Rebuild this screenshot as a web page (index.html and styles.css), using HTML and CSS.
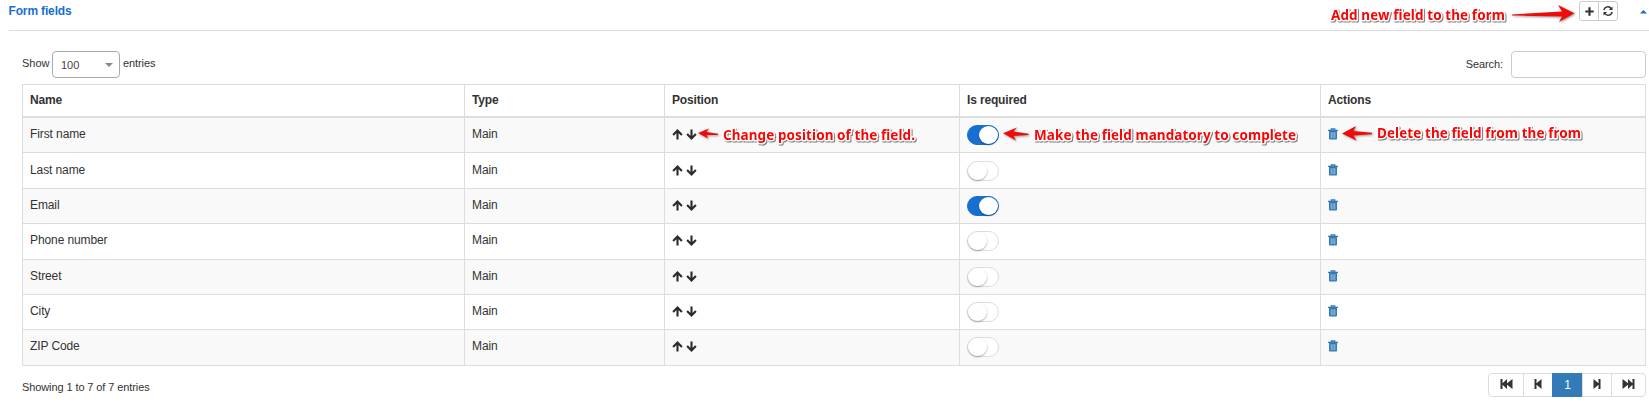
FILE: index.html
```html
<!DOCTYPE html>
<html lang="en">
<head>
<meta charset="utf-8">
<title>Form fields</title>
<link rel="stylesheet" href="styles.css">
</head>
<body>
<svg width="0" height="0" class="defs" aria-hidden="true">
  <symbol id="up" viewBox="0 0 11 11"><path d="M5.5 10.4V2M1.1 6L5.5 1.5L9.9 6" fill="none" stroke="#2b2b2b" stroke-width="2.1"/></symbol>
  <symbol id="down" viewBox="0 0 11 11"><path d="M5.5 .6V9M1.1 5L5.5 9.5L9.9 5" fill="none" stroke="#2b2b2b" stroke-width="2.1"/></symbol>
  <symbol id="trash" viewBox="0 0 10 12"><path d="M3.2 2V.8H6.8V2M0 2.4H10" fill="none" stroke="#337ab7" stroke-width="1.2"/><path d="M1 3H9V10.5Q9 11.5 8 11.5H2Q1 11.5 1 10.5Z" fill="#337ab7"/><path d="M3.2 4.2V10.2M5 4.2V10.2M6.8 4.2V10.2" stroke="#b9d2e8" stroke-width=".8"/></symbol>
</svg>
<header class="panel-head">
  <h2 class="title">Form fields</h2>
  <div class="tools">
    <button class="tool"><svg width="9" height="9" viewBox="0 0 9 9"><path d="M4.5 .3V8.7M.3 4.5H8.7" stroke="#333" stroke-width="2.2"/></svg></button>
    <button class="tool"><svg width="10" height="10" viewBox="0 0 10 10"><path d="M.9 4.2A4 4 0 0 1 8.2 2.6M9.1 5.8A4 4 0 0 1 1.8 7.4" fill="none" stroke="#333" stroke-width="1.4"/><path d="M9.5 .4V4H5.9ZM.5 9.6V6H4.1Z" fill="#333"/></svg></button>
  </div>
  <svg class="caret" width="7" height="4" viewBox="0 0 7 4"><path d="M0 3.5L3.5 0L7 3.5Z" fill="#1670cf"/></svg>
</header>
<main class="panel">
  <div class="controls">
    <span class="show">Show</span>
    <div class="select"><span>100</span><svg width="8" height="4" viewBox="0 0 8 4"><path d="M0 0H8L4 4Z" fill="#888"/></svg></div>
    <span class="entries">entries</span>
    <label class="search" for="q">Search:</label>
    <input class="query" id="q" type="text">
  </div>
  <table class="grid">
    <colgroup><col class="c1"><col class="c2"><col class="c3"><col class="c4"><col class="c5"></colgroup>
    <thead><tr><th>Name</th><th>Type</th><th>Position</th><th>Is required</th><th>Actions</th></tr></thead>
    <tbody>
      <tr class="odd"><td>First name</td><td>Main</td><td><div class="moves"><svg><use href="#up"/></svg><svg><use href="#down"/></svg></div></td><td><div class="switch on"></div></td><td><svg class="trash"><use href="#trash"/></svg></td></tr>
      <tr class="tall low"><td>Last name</td><td>Main</td><td><div class="moves"><svg><use href="#up"/></svg><svg><use href="#down"/></svg></div></td><td><div class="switch"></div></td><td><svg class="trash"><use href="#trash"/></svg></td></tr>
      <tr class="odd"><td>Email</td><td>Main</td><td><div class="moves"><svg><use href="#up"/></svg><svg><use href="#down"/></svg></div></td><td><div class="switch on"></div></td><td><svg class="trash"><use href="#trash"/></svg></td></tr>
      <tr class="tall"><td>Phone number</td><td>Main</td><td><div class="moves"><svg><use href="#up"/></svg><svg><use href="#down"/></svg></div></td><td><div class="switch"></div></td><td><svg class="trash"><use href="#trash"/></svg></td></tr>
      <tr class="odd"><td>Street</td><td>Main</td><td><div class="moves"><svg><use href="#up"/></svg><svg><use href="#down"/></svg></div></td><td><div class="switch"></div></td><td><svg class="trash"><use href="#trash"/></svg></td></tr>
      <tr><td>City</td><td>Main</td><td><div class="moves"><svg><use href="#up"/></svg><svg><use href="#down"/></svg></div></td><td><div class="switch"></div></td><td><svg class="trash"><use href="#trash"/></svg></td></tr>
      <tr class="odd tall"><td>ZIP Code</td><td>Main</td><td><div class="moves"><svg><use href="#up"/></svg><svg><use href="#down"/></svg></div></td><td><div class="switch"></div></td><td><svg class="trash"><use href="#trash"/></svg></td></tr>
    </tbody>
  </table>
  <footer class="foot">
    <span class="info">Showing 1 to 7 of 7 entries</span>
    <div class="pages">
      <a class="page wide"><svg width="13" height="10" viewBox="0 0 13 10"><path d="M.5 0H2.5V4.3L7 0V4.3L12.5 0V10L7 5.7V10L2.5 5.7V10H.5Z" fill="#333"/></svg></a>
      <a class="page"><svg width="8" height="10" viewBox="0 0 8 10"><path d="M.5 0H2.5V4.3L7.5 0V10L2.5 5.7V10H.5Z" fill="#333"/></svg></a>
      <a class="page active">1</a>
      <a class="page"><svg width="8" height="10" viewBox="0 0 8 10"><path d="M7.5 0H5.5V4.3L.5 0V10L5.5 5.7V10H7.5Z" fill="#333"/></svg></a>
      <a class="page wide"><svg width="13" height="10" viewBox="0 0 13 10"><path d="M12.5 0H10.5V4.3L6 0V4.3L.5 0V10L6 5.7V10L10.5 5.7V10H12.5Z" fill="#333"/></svg></a>
    </div>
  </footer>
</main>
<svg class="notes" width="1649" height="404" viewBox="0 0 1649 404">
  <g class="arrow">
    <path d="M1512 14.4L1562 11.6L1558 5L1574.5 13.3L1559 22L1562 16.4L1512 15.6Z"/>
    <path d="M698 133L709 128.5L706.5 132L718 133.8V135L706.5 135L708 138.5Z"/>
    <path d="M1003 133.3L1017 127.5L1013.5 131.5L1028.5 133.8V135L1013.5 136L1016 140.5Z"/>
    <path d="M1342 133.5L1356 126L1353.5 131L1372 132.7V134.2L1353.5 135.6L1356.5 140.5Z"/>
  </g>
  <g class="note">
    <text x="1331" y="20" textLength="174">Add new field to the form</text>
    <text x="723" y="140" textLength="192">Change position of the field.</text>
    <text x="1034" y="140" textLength="262">Make the field mandatory to complete</text>
    <text x="1377" y="138" textLength="204">Delete the field from the from</text>
  </g>
</svg>
</body>
</html>
```
FILE: styles.css
```css
* { box-sizing: border-box; }
body {
  margin: 0;
  width: 1649px;
  height: 404px;
  overflow: hidden;
  position: relative;
  background: #fff;
  color: #333;
  font: 11px/16px "Liberation Sans", Arial, sans-serif;
}
svg { display: block; }
.defs { position: absolute; }
.panel-head {
  display: flex;
  height: 31px;
  margin-left: 9px;
  border-bottom: 1px solid #ddd;
}
.title {
  margin: 3px 0 0 -.5px;
  font-size: 12px;
  line-height: 16px;
  letter-spacing: -.15px;
  color: #1670cf;
}
.tools { display: flex; height: 20px; margin: 1px 22px 0 auto; }
.tool {
  display: flex;
  align-items: center;
  justify-content: center;
  width: 20px;
  padding: 0;
  border: 1px solid #ccc;
  border-radius: 3px 0 0 3px;
  background: #fff;
}
.tool + .tool { margin-left: -1px; border-radius: 0 3px 3px 0; }
.caret { margin: 10px 2px 0 0; }
.panel { padding: 20px 3px 0 22px; }
.controls { display: flex; height: 33px; }
.show { width: 30px; padding-top: 4px; }
.entries { margin-left: 3px; padding-top: 4px; letter-spacing: -.1px; }
.select {
  display: flex;
  align-items: center;
  justify-content: space-between;
  width: 68px;
  height: 27px;
  padding: 1px 6px 0 8px;
  border: 1px solid #aaa;
  border-radius: 4px;
  font-size: 11px;
  color: #444;
}
.search { margin-left: auto; padding-top: 5px; letter-spacing: -.1px; }
.query {
  width: 135px;
  height: 27px;
  margin-left: 8px;
  border: 1px solid #ccc;
  border-radius: 4px;
  background: #fff;
}
.grid {
  width: 1624px;
  table-layout: fixed;
  border-collapse: separate;
  border-spacing: 0;
  border-top: 1px solid #ddd;
  border-left: 1px solid #ddd;
  font-size: 12px;
}
.c1 { width: 442px; }
.c2 { width: 200px; }
.c3 { width: 295px; }
.c4 { width: 361px; }
.c5 { width: 325px; }
.grid th {
  height: 33px;
  padding: 7px 7px 0;
  text-align: left;
  vertical-align: top;
  border-right: 1px solid #ddd;
  border-bottom: 2px solid #ddd;
  letter-spacing: -.15px;
}
.grid td {
  height: 35px;
  padding: 8px 7px 0;
  vertical-align: top;
  border-right: 1px solid #ddd;
  border-bottom: 1px solid #ddd;
  letter-spacing: -.1px;
}
.tall td { height: 36px; }
.low td { padding-top: 9px; }
.odd td { background: #f9f9f9; }
.moves { display: flex; gap: 3px; padding-top: 3px; }
.moves svg { width: 11px; height: 11px; }
.trash { width: 10px; height: 12px; margin-top: 2px; }
.switch {
  width: 32px;
  height: 20px;
  margin: -1px 0 0;
  border: 1px solid #ddd;
  border-radius: 10px;
  background: #fff;
}
.switch::before {
  content: "";
  display: block;
  width: 19px;
  height: 18px;
  border-radius: 50%;
  background: #fff;
  box-shadow: 0 1px 2px rgba(0, 0, 0, .32);
}
.switch.on { border-color: #1670cf; background: #1670cf; }
.switch.on::before { margin-left: 11px; }
.foot { display: flex; justify-content: space-between; padding-top: 7px; }
.info { padding-top: 6px; letter-spacing: -.1px; }
.pages { display: flex; height: 24px; }
.page {
  display: flex;
  align-items: center;
  justify-content: center;
  width: 30px;
  margin-left: -1px;
  padding-bottom: 2px;
  border: 1px solid #ddd;
  font-size: 12px;
}
.page.wide { width: 36px; }
.page:first-child { border-radius: 4px 0 0 4px; }
.page:last-child { border-radius: 0 4px 4px 0; width: 35px; }
.page.active { width: 31px; padding: 0; background: #337ab7; border-color: #337ab7; color: #fff; }
.notes { position: absolute; left: 0; top: 0; pointer-events: none; }
.arrow {
  fill: #f00a0a;
  filter: drop-shadow(1px 1px 1px rgba(0, 0, 0, .4));
}
.note {
  font: bold 13.5px "Noto Sans", "Open Sans", sans-serif;
  fill: #fa0505;
  stroke: #fff;
  stroke-width: 3px;
  stroke-linejoin: round;
  paint-order: stroke;
  filter: drop-shadow(1px 1px .7px rgba(0, 0, 0, .5));
}
```
